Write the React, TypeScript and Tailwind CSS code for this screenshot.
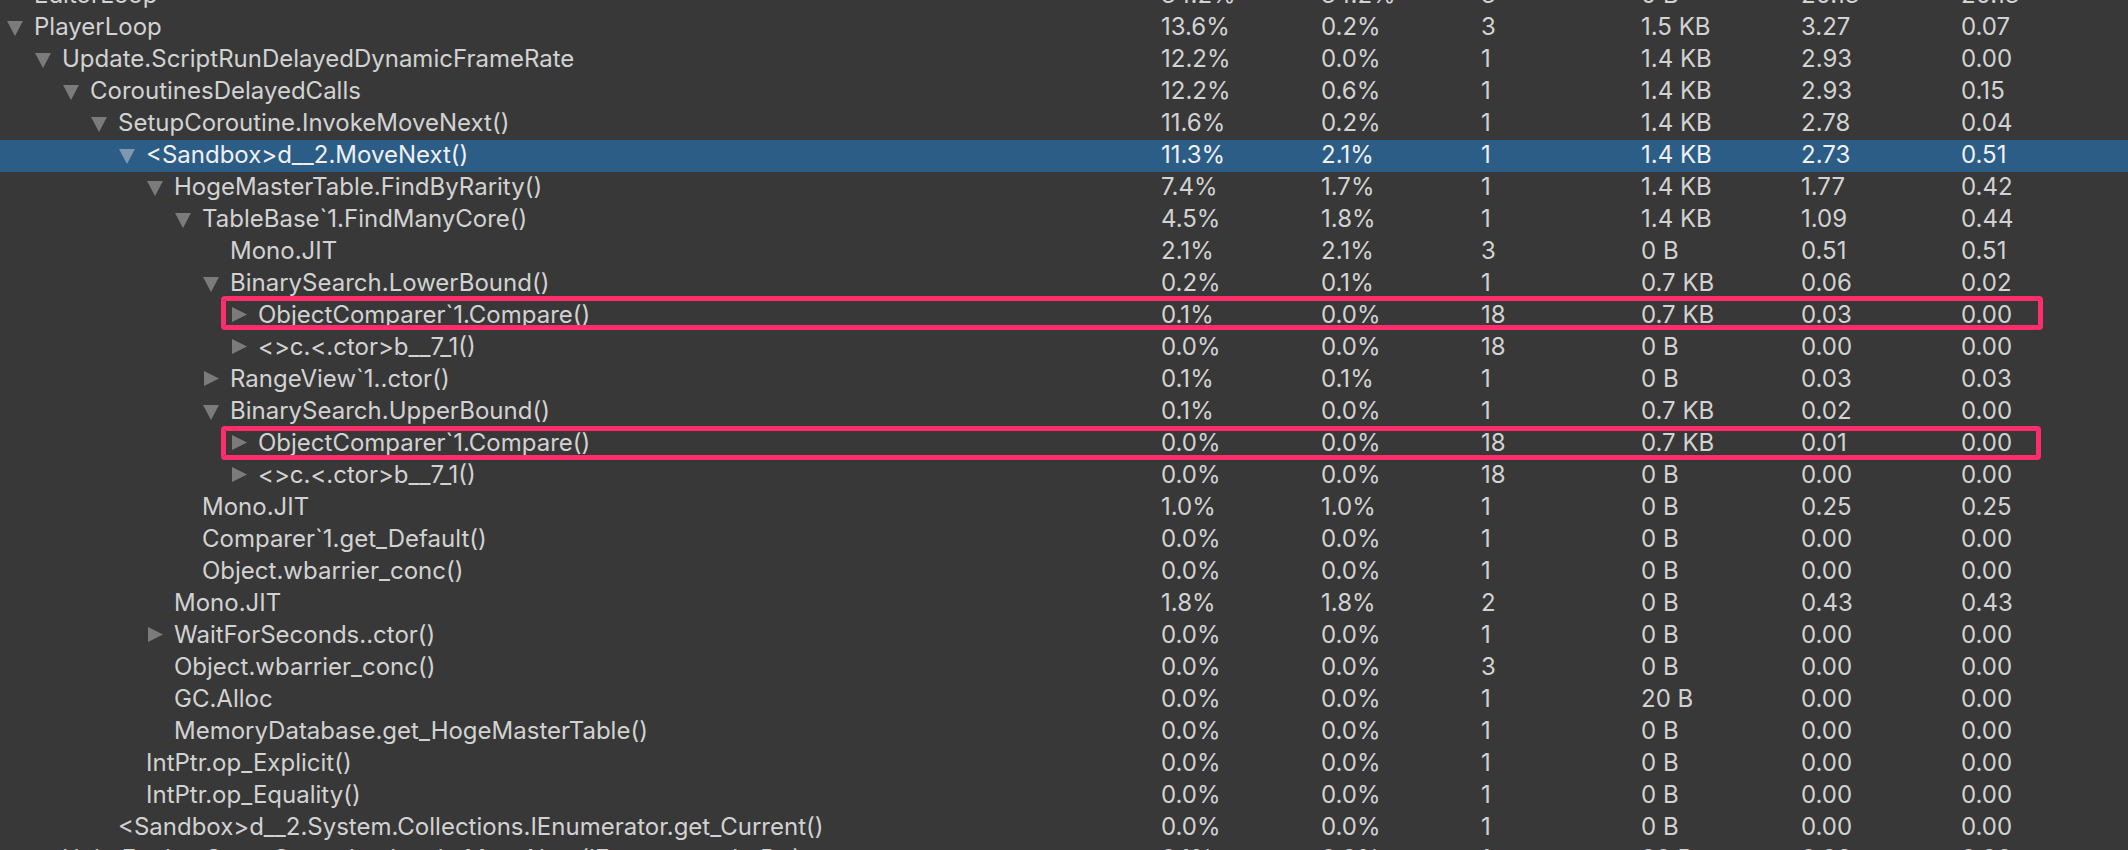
import React from 'react';

type Arrow = 'down' | 'right' | null;

interface ProfilerRow {
  name: string;
  depth: number;
  arrow: Arrow;
  values: string[];
  selected?: boolean;
}

const zeroRow = ['0.0%', '0.0%', '1', '0 B', '0.00', '0.00'];

const rows: ProfilerRow[] = [
  { name: 'EditorLoop', depth: 0, arrow: null, values: ['34.2%', '34.2%', '3', '0 B', '20.13', '20.13'] },
  { name: 'PlayerLoop', depth: 0, arrow: 'down', values: ['13.6%', '0.2%', '3', '1.5 KB', '3.27', '0.07'] },
  { name: 'Update.ScriptRunDelayedDynamicFrameRate', depth: 1, arrow: 'down', values: ['12.2%', '0.0%', '1', '1.4 KB', '2.93', '0.00'] },
  { name: 'CoroutinesDelayedCalls', depth: 2, arrow: 'down', values: ['12.2%', '0.6%', '1', '1.4 KB', '2.93', '0.15'] },
  { name: 'SetupCoroutine.InvokeMoveNext()', depth: 3, arrow: 'down', values: ['11.6%', '0.2%', '1', '1.4 KB', '2.78', '0.04'] },
  { name: '<Sandbox>d__2.MoveNext()', depth: 4, arrow: 'down', selected: true, values: ['11.3%', '2.1%', '1', '1.4 KB', '2.73', '0.51'] },
  { name: 'HogeMasterTable.FindByRarity()', depth: 5, arrow: 'down', values: ['7.4%', '1.7%', '1', '1.4 KB', '1.77', '0.42'] },
  { name: 'TableBase`1.FindManyCore()', depth: 6, arrow: 'down', values: ['4.5%', '1.8%', '1', '1.4 KB', '1.09', '0.44'] },
  { name: 'Mono.JIT', depth: 7, arrow: null, values: ['2.1%', '2.1%', '3', '0 B', '0.51', '0.51'] },
  { name: 'BinarySearch.LowerBound()', depth: 7, arrow: 'down', values: ['0.2%', '0.1%', '1', '0.7 KB', '0.06', '0.02'] },
  { name: 'ObjectComparer`1.Compare()', depth: 8, arrow: 'right', values: ['0.1%', '0.0%', '18', '0.7 KB', '0.03', '0.00'] },
  { name: '<>c.<.ctor>b__7_1()', depth: 8, arrow: 'right', values: ['0.0%', '0.0%', '18', '0 B', '0.00', '0.00'] },
  { name: 'RangeView`1..ctor()', depth: 7, arrow: 'right', values: ['0.1%', '0.1%', '1', '0 B', '0.03', '0.03'] },
  { name: 'BinarySearch.UpperBound()', depth: 7, arrow: 'down', values: ['0.1%', '0.0%', '1', '0.7 KB', '0.02', '0.00'] },
  { name: 'ObjectComparer`1.Compare()', depth: 8, arrow: 'right', values: ['0.0%', '0.0%', '18', '0.7 KB', '0.01', '0.00'] },
  { name: '<>c.<.ctor>b__7_1()', depth: 8, arrow: 'right', values: ['0.0%', '0.0%', '18', '0 B', '0.00', '0.00'] },
  { name: 'Mono.JIT', depth: 6, arrow: null, values: ['1.0%', '1.0%', '1', '0 B', '0.25', '0.25'] },
  { name: 'Comparer`1.get_Default()', depth: 6, arrow: null, values: zeroRow },
  { name: 'Object.wbarrier_conc()', depth: 6, arrow: null, values: zeroRow },
  { name: 'Mono.JIT', depth: 5, arrow: null, values: ['1.8%', '1.8%', '2', '0 B', '0.43', '0.43'] },
  { name: 'WaitForSeconds..ctor()', depth: 5, arrow: 'right', values: zeroRow },
  { name: 'Object.wbarrier_conc()', depth: 5, arrow: null, values: ['0.0%', '0.0%', '3', '0 B', '0.00', '0.00'] },
  { name: 'GC.Alloc', depth: 5, arrow: null, values: ['0.0%', '0.0%', '1', '20 B', '0.00', '0.00'] },
  { name: 'MemoryDatabase.get_HogeMasterTable()', depth: 5, arrow: null, values: zeroRow },
  { name: 'IntPtr.op_Explicit()', depth: 4, arrow: null, values: zeroRow },
  { name: 'IntPtr.op_Equality()', depth: 4, arrow: null, values: zeroRow },
  { name: '<Sandbox>d__2.System.Collections.IEnumerator.get_Current()', depth: 3, arrow: null, values: zeroRow },
  { name: 'UnityEngine.SetupCoroutine.InvokeMoveNext(IEnumerator,IntPtr)', depth: 1, arrow: null, values: ['0.1%', '0.0%', '1', '20 B', '0.03', '0.00'] },
];

const Foldout = ({ arrow, selected }: { arrow: Arrow; selected?: boolean }) => {
  const fill = selected ? '#7f98b0' : '#7b7b7b';
  if (arrow === 'down') {
    return (
      <svg width="16" height="15" viewBox="0 0 16 15" className="mt-[3px]">
        <polygon points="0,0 16,0 8,15" fill={fill} />
      </svg>
    );
  }
  if (arrow === 'right') {
    return (
      <svg width="15" height="15" viewBox="0 0 15 15" className="ml-[1px]">
        <polygon points="0,0 15,7.5 0,15" fill={fill} />
      </svg>
    );
  }
  return null;
};

const Row = ({ row }: { row: ProfilerRow }) => (
  <div
    className={
      row.selected
        ? 'flex h-[32px] items-center pb-[3px] bg-[#2c5d87] text-[#f0f0f0]'
        : 'flex h-[32px] items-center pb-[3px] text-[#d2d2d2]'
    }
  >
    <div className="flex w-[1161px] shrink-0 items-center overflow-hidden whitespace-nowrap">
      <div style={{ width: 7 + row.depth * 28 }} className="shrink-0" />
      <div className="flex w-[16px] shrink-0 items-center">
        <Foldout arrow={row.arrow} selected={row.selected} />
      </div>
      <span className="ml-[11px] leading-[29px]">{row.name}</span>
    </div>
    {row.values.map((v, i) => (
      <div key={i} className="w-[160px] shrink-0 whitespace-nowrap leading-[29px]">
        {v}
      </div>
    ))}
  </div>
);

export default function App() {
  return (
    <div
      className="relative h-[850px] w-[2128px] overflow-hidden bg-[#383838] text-[24px]"
      style={{ fontFamily: 'Inter, "Noto Sans", sans-serif' }}
    >
      <div className="mt-[-20px]">
        {rows.map((row, i) => (
          <Row key={i} row={row} />
        ))}
      </div>
      {/* highlight annotations */}
      <div className="absolute left-[221px] top-[296px] h-[34px] w-[1822px] rounded-[4px] border-[5px] border-[#ff2d6c]" />
      <div className="absolute left-[221px] top-[426px] h-[34px] w-[1820px] rounded-[4px] border-[5px] border-[#ff2d6c]" />
    </div>
  );
}
